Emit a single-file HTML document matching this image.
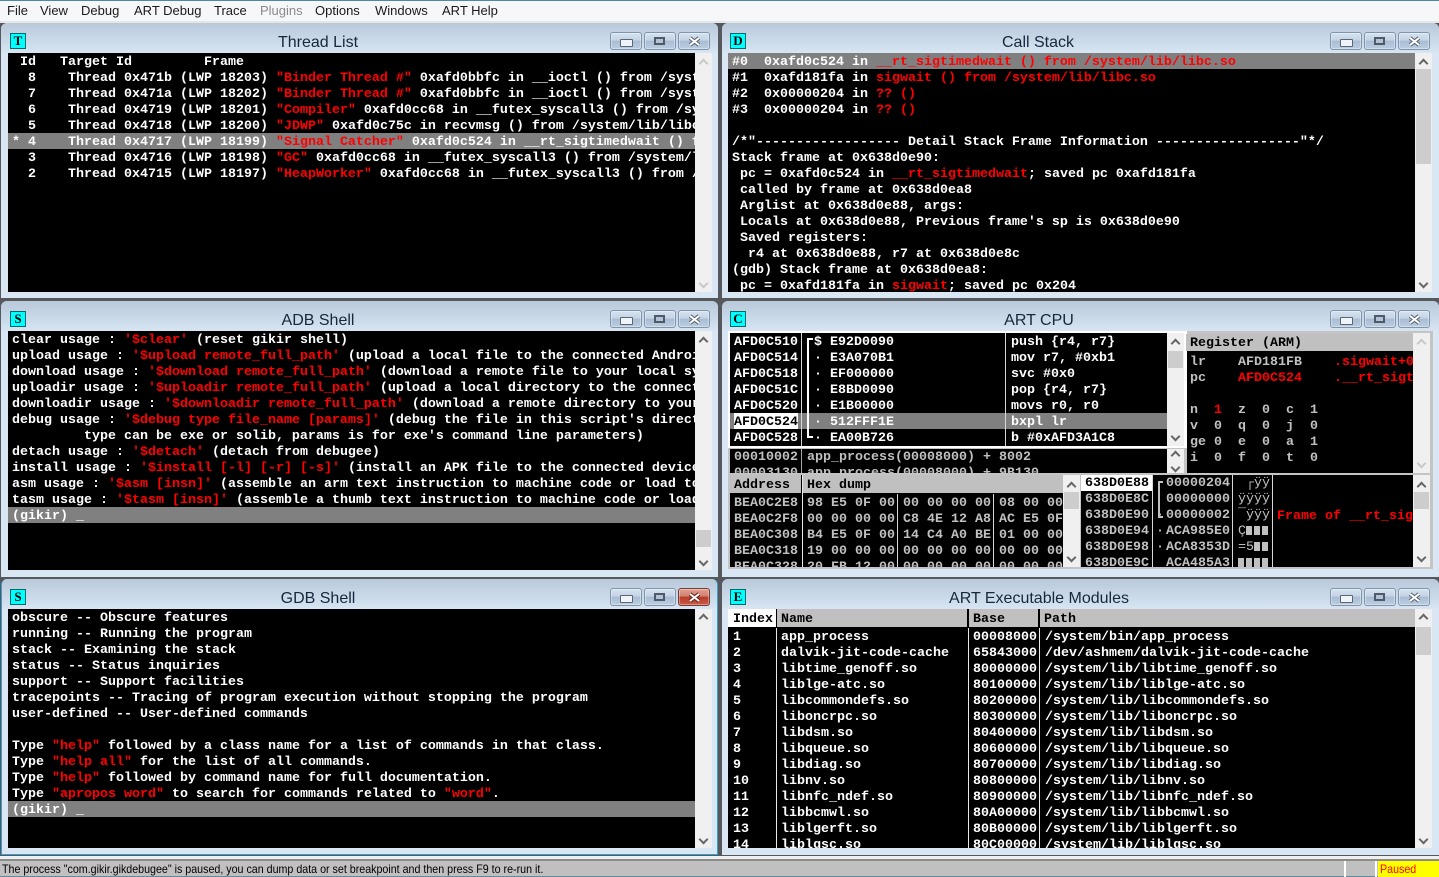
<!DOCTYPE html>
<html><head><meta charset="utf-8"><style>
html,body{margin:0;padding:0;width:1439px;height:877px;overflow:hidden;background:#55585c}
*{box-sizing:border-box}
div,pre{position:absolute;margin:0}
pre{font:bold 13.33px/16px "Liberation Mono","DejaVu Sans Mono",monospace;color:#fff;overflow:hidden;white-space:pre;padding-top:2px}
i{font-style:normal;color:#f00}
.g{color:#c0c0c0}
.k{background:#000}
.panel{background:#d9e6f4;border-radius:6px 6px 0 0}
.tbar{left:0;top:0;right:0;height:30px;background:linear-gradient(#b8c9da,#d7e5f3);border-radius:6px 6px 0 0}
.title{top:10px;font:16px/20px "Liberation Sans",sans-serif;color:#16283c;text-align:center;white-space:nowrap}
.ic{width:16px;height:16px;background:#00ffff;border:1px solid #0a6a6a;font:bold 13px/14px "Liberation Serif",serif;color:#000;text-align:center}
.bn{top:9px;width:32px;height:18px;border:1px solid #8094ae;border-radius:3px;background:linear-gradient(#d6e2ef 0,#c4d3e4 45%,#a8bdd4 50%,#bccde0 100%);box-shadow:inset 0 0 0 1px rgba(255,255,255,.35)}
.bn.m:after{content:"";position:absolute;left:9px;top:6px;width:11px;height:6px;background:#f0f4f8;border:1px solid #5a6675;border-radius:1px}
.bn.red{background:linear-gradient(#e0a090 0,#d08070 45%,#b83a28 50%,#c85a48 100%);border-color:#7a3a34}
.bn svg{position:absolute;left:9px;top:3px}
.bn svg.rs{top:4px}
.sb{background:#f0f0f0;width:17px}
.th{left:1px;width:15px;background:#cdcdcd}
.ch{width:7px;height:7px;left:5px;border-left:2px solid #666;border-top:2px solid #666;transform:rotate(45deg)}
.ch.d{transform:rotate(225deg)}
.ch.f{border-color:#c8c8c8}
.hl{background:#808080;height:16px}
.vs{width:1px;background:#d8d8d8}
.hd{background:#c0c0c0;color:#000}
.bk{width:6px;height:9px;background:#c0c0c0}
.menu{left:0;top:0;width:1439px;height:21px;background:#f6f7f8;border-top:1px solid #4a8aa8}
.menu span{position:absolute;top:1px;font:13px/18px "Liberation Sans",sans-serif;color:#1a1a1a;white-space:nowrap}
.nr{display:inline-block;white-space:nowrap;transform:scaleX(.89);transform-origin:0 0}
</style></head><body>
<div class="menu">
<span style="left:7px">File</span><span style="left:40px">View</span><span style="left:81px">Debug</span><span style="left:134px">ART Debug</span><span style="left:214px">Trace</span><span style="left:260px;color:#8a8a8a">Plugins</span><span style="left:315px">Options</span><span style="left:375px">Windows</span><span style="left:442px">ART Help</span>
</div>
<div style="left:0;top:21px;width:1439px;height:2px;background:#e6e6e6"></div>

<!-- Thread List -->
<div class="panel" style="left:1px;top:23px;width:717px;height:275px">
<div class="tbar"></div><div class="ic" style="left:9px;top:10px">T</div>
<div class="title" style="left:0;width:634px">Thread List</div>
<div class="bn m" style="left:609px"></div>
<div class="bn" style="left:643px"><svg class="rs" width="11" height="8"><rect x="1" y="1" width="9" height="6" fill="#b4c4d6" stroke="#4e5a6a" stroke-width="2"/></svg></div>
<div class="bn" style="left:677px"><svg width="13" height="11"><path d="M2 2 L11 9 M11 2 L2 9" stroke="#5a6675" stroke-width="4"/><path d="M2 2 L11 9 M11 2 L2 9" stroke="#fff" stroke-width="2"/></svg></div>
</div>
<div class="k" style="left:8px;top:53px;width:687px;height:239px"></div>
<div class="hl" style="left:8px;top:133px;width:687px"></div>
<pre style="left:12px;top:53px;width:683px;height:239px"> Id   Target Id         Frame
  8    Thread 0x471b (LWP 18203) <i>"Binder Thread #"</i> 0xafd0bbfc in __ioctl () from /system/lib/libc.so
  7    Thread 0x471a (LWP 18202) <i>"Binder Thread #"</i> 0xafd0bbfc in __ioctl () from /system/lib/libc.so
  6    Thread 0x4719 (LWP 18201) <i>"Compiler"</i> 0xafd0cc68 in __futex_syscall3 () from /system/lib/libc.so
  5    Thread 0x4718 (LWP 18200) <i>"JDWP"</i> 0xafd0c75c in recvmsg () from /system/lib/libc.so
* 4    Thread 0x4717 (LWP 18199) <i>"Signal Catcher"</i> 0xafd0c524 in __rt_sigtimedwait () from /system/lib/libc.so
  3    Thread 0x4716 (LWP 18198) <i>"GC"</i> 0xafd0cc68 in __futex_syscall3 () from /system/lib/libc.so
  2    Thread 0x4715 (LWP 18197) <i>"HeapWorker"</i> 0xafd0cc68 in __futex_syscall3 () from /system/lib/libc.so</pre>
<div class="sb" style="left:695px;top:53px;height:239px"><div class="ch f" style="top:7px"></div><div class="ch d f" style="top:227px"></div></div>

<!-- Call Stack -->
<div class="panel" style="left:722px;top:23px;width:717px;height:275px">
<div class="tbar"></div><div class="ic" style="left:8px;top:10px">D</div>
<div class="title" style="left:0;width:632px">Call Stack</div>
<div class="bn m" style="left:608px"></div>
<div class="bn" style="left:642px"><svg class="rs" width="11" height="8"><rect x="1" y="1" width="9" height="6" fill="#b4c4d6" stroke="#4e5a6a" stroke-width="2"/></svg></div>
<div class="bn" style="left:676px"><svg width="13" height="11"><path d="M2 2 L11 9 M11 2 L2 9" stroke="#5a6675" stroke-width="4"/><path d="M2 2 L11 9 M11 2 L2 9" stroke="#fff" stroke-width="2"/></svg></div>
</div>
<div class="k" style="left:728px;top:53px;width:687px;height:239px"></div>
<div class="hl" style="left:728px;top:53px;width:687px"></div>
<pre style="left:732px;top:53px;width:683px;height:239px">#0  0xafd0c524 in <i>__rt_sigtimedwait () from /system/lib/libc.so</i>
#1  0xafd181fa in <i>sigwait () from /system/lib/libc.so</i>
#2  0x00000204 in <i>?? ()</i>
#3  0x00000204 in <i>?? ()</i>

/*"------------------ Detail Stack Frame Information ------------------"*/
Stack frame at 0x638d0e90:
 pc = 0xafd0c524 in <i>__rt_sigtimedwait</i>; saved pc 0xafd181fa
 called by frame at 0x638d0ea8
 Arglist at 0x638d0e88, args:
 Locals at 0x638d0e88, Previous frame's sp is 0x638d0e90
 Saved registers:
  r4 at 0x638d0e88, r7 at 0x638d0e8c
(gdb) Stack frame at 0x638d0ea8:
 pc = 0xafd181fa in <i>sigwait</i>; saved pc 0x204</pre>
<div class="sb" style="left:1415px;top:53px;height:239px"><div class="ch" style="top:7px"></div><div class="th" style="top:16px;height:95px"></div><div class="ch d" style="top:227px"></div></div>

<!-- ADB Shell -->
<div class="panel" style="left:1px;top:301px;width:717px;height:276px">
<div class="tbar"></div><div class="ic" style="left:9px;top:10px">S</div>
<div class="title" style="left:0;width:634px">ADB Shell</div>
<div class="bn m" style="left:609px"></div>
<div class="bn" style="left:643px"><svg class="rs" width="11" height="8"><rect x="1" y="1" width="9" height="6" fill="#b4c4d6" stroke="#4e5a6a" stroke-width="2"/></svg></div>
<div class="bn" style="left:677px"><svg width="13" height="11"><path d="M2 2 L11 9 M11 2 L2 9" stroke="#5a6675" stroke-width="4"/><path d="M2 2 L11 9 M11 2 L2 9" stroke="#fff" stroke-width="2"/></svg></div>
</div>
<div class="k" style="left:8px;top:331px;width:687px;height:239px"></div>
<div class="hl" style="left:8px;top:507px;width:687px"></div>
<pre style="left:12px;top:331px;width:683px;height:239px">clear usage : <i>'$clear'</i> (reset gikir shell)
upload usage : <i>'$upload remote_full_path'</i> (upload a local file to the connected Android device)
download usage : <i>'$download remote_full_path'</i> (download a remote file to your local system)
uploadir usage : <i>'$uploadir remote_full_path'</i> (upload a local directory to the connected device)
downloadir usage : <i>'$downloadir remote_full_path'</i> (download a remote directory to your local system)
debug usage : <i>'$debug type file_name [params]'</i> (debug the file in this script's directory)
         type can be exe or solib, params is for exe's command line parameters)
detach usage : <i>'$detach'</i> (detach from debugee)
install usage : <i>'$install [-l] [-r] [-s]'</i> (install an APK file to the connected device)
asm usage : <i>'$asm [insn]'</i> (assemble an arm text instruction to machine code or load to memory)
tasm usage : <i>'$tasm [insn]'</i> (assemble a thumb text instruction to machine code or load to memory)
(gikir) _</pre>
<div class="sb" style="left:695px;top:331px;height:239px"><div class="ch" style="top:7px"></div><div class="th" style="top:199px;height:17px"></div><div class="ch d" style="top:227px"></div></div>

<!-- ART CPU -->
<div class="panel" style="left:722px;top:301px;width:717px;height:276px">
<div class="tbar"></div><div class="ic" style="left:8px;top:10px">C</div>
<div class="title" style="left:0;width:634px">ART CPU</div>
<div class="bn m" style="left:608px"></div>
<div class="bn" style="left:642px"><svg class="rs" width="11" height="8"><rect x="1" y="1" width="9" height="6" fill="#b4c4d6" stroke="#4e5a6a" stroke-width="2"/></svg></div>
<div class="bn" style="left:676px"><svg width="13" height="11"><path d="M2 2 L11 9 M11 2 L2 9" stroke="#5a6675" stroke-width="4"/><path d="M2 2 L11 9 M11 2 L2 9" stroke="#fff" stroke-width="2"/></svg></div>
</div>
<div style="left:728px;top:331px;width:705px;height:238px;background:#c4c4c4"></div>
<div style="left:728px;top:331px;width:459px;height:117px;background:#fff"></div>
<div class="k" style="left:730px;top:333px;width:437px;height:113px"></div>
<div class="hl" style="left:730px;top:413px;width:437px"></div>
<div style="left:734px;top:413px;width:64px;height:16px;background:#fff"></div>
<div class="vs" style="left:801px;top:333px;height:113px"></div>
<div class="vs" style="left:1005px;top:333px;height:113px"></div>
<pre style="left:734px;top:333px;width:66px;height:113px">AFD0C510
AFD0C514
AFD0C518
AFD0C51C
AFD0C520
<span style="color:#000">AFD0C524</span>
AFD0C528</pre>
<div style="left:807px;top:338px;width:6px;height:100px;border-left:2px solid #fff;border-top:2px solid #fff;border-bottom:2px solid #fff"></div>
<pre style="left:814px;top:333px;width:190px;height:113px">$ E92D0090
· E3A070B1
· EF000000
· E8BD0090
· E1B00000
· 512FFF1E
· EA00B726</pre>
<pre style="left:1011px;top:333px;width:156px;height:113px">push {r4, r7}
mov r7, #0xb1
svc #0x0
pop {r4, r7}
movs r0, r0
bxpl lr
b #0xAFD3A1C8</pre>
<div class="sb" style="left:1167px;top:333px;height:113px"><div class="ch" style="top:7px"></div><div class="th" style="top:18px;height:17px"></div><div class="ch d" style="top:100px"></div></div>
<div class="k" style="left:730px;top:449px;width:437px;height:24px"></div>
<div class="vs" style="left:801px;top:449px;height:24px;background:#a8a8a8"></div>
<pre class="g" style="left:734px;top:449px;width:66px;height:24px;padding-top:1px">00010002
00003130</pre>
<pre class="g" style="left:807px;top:449px;width:358px;height:24px;padding-top:1px">app_process(00008000) + 8002
app_process(00008000) + 9B130</pre>
<div class="sb" style="left:1167px;top:449px;height:24px"><div class="ch" style="top:3px"></div><div class="ch d" style="top:15px"></div></div>

<div class="k" style="left:1187px;top:334px;width:226px;height:139px"></div>
<pre class="hd" style="left:1186px;top:334px;width:227px;height:17px;padding-left:4px">Register (ARM)</pre>
<pre class="g" style="left:1190px;top:353px;width:223px;height:120px">lr    AFD181FB    <i>.sigwait+0x2</i>
pc    <i>AFD0C524</i>    <i>.__rt_sigtimedwait</i>

n  <i>1</i>  z  0  c  1
v  0  q  0  j  0
ge 0  e  0  a  1
i  0  f  0  t  0</pre>
<div class="sb" style="left:1413px;top:333px;height:140px"><div class="ch f" style="top:7px"></div><div class="ch d f" style="top:127px"></div></div>

<div class="k" style="left:730px;top:475px;width:333px;height:92px"></div>
<pre class="hd" style="left:730px;top:475px;width:71px;height:18px;padding:3px 0 0 4px">Address</pre>
<pre class="hd" style="left:803px;top:475px;width:260px;height:18px;padding:3px 0 0 4px">Hex dump</pre>
<div class="vs" style="left:802px;top:475px;height:92px;width:1px;background:#e8e8e8"></div>
<div class="vs" style="left:897px;top:494px;height:73px"></div>
<div class="vs" style="left:993px;top:494px;height:73px"></div>
<pre class="g" style="left:734px;top:494px;width:66px;height:73px">BEA0C2E8
BEA0C2F8
BEA0C308
BEA0C318
BEA0C328</pre>
<pre class="g" style="left:807px;top:494px;width:90px;height:73px">98 E5 0F 00
00 00 00 00
B4 E5 0F 00
19 00 00 00
20 FB 12 00</pre>
<pre class="g" style="left:903px;top:494px;width:90px;height:73px">00 00 00 00
C8 4E 12 A8
14 C4 A0 BE
00 00 00 00
00 00 00 00</pre>
<pre class="g" style="left:999px;top:494px;width:64px;height:73px">08 00 00 00
AC E5 0F 00
01 00 00 00
00 00 00 00
00 00 00 00</pre>
<div class="sb" style="left:1063px;top:475px;height:92px;border-right:0"><div class="ch" style="top:8px"></div><div class="th" style="top:17px;height:17px"></div><div class="ch d" style="top:79px"></div></div>

<div class="k" style="left:1081px;top:475px;width:332px;height:92px"></div>
<div style="left:1081px;top:475px;width:71px;height:16px;background:#fff"></div>
<div class="vs" style="left:1152px;top:475px;height:92px"></div>
<div class="vs" style="left:1232px;top:475px;height:92px"></div>
<div class="vs" style="left:1272px;top:475px;height:92px"></div>
<pre class="g" style="left:1085px;top:475px;width:66px;height:92px;padding-top:1px"><span style="color:#000">638D0E88</span>
638D0E8C
638D0E90
638D0E94
638D0E98
638D0E9C</pre>
<div style="left:1158px;top:481px;width:5px;height:37px;border-left:2px solid #c0c0c0;border-top:2px solid #c0c0c0;border-bottom:2px solid #c0c0c0"></div>
<pre class="g" style="left:1166px;top:475px;width:66px;height:92px;padding-top:1px">00000204
00000000
00000002
ACA985E0
ACA8353D
ACA485A3</pre>
<pre class="g" style="left:1156px;top:475px;width:9px;height:92px;padding-top:1px">


·
·
·</pre>
<pre class="g" style="left:1238px;top:475px;width:34px;height:92px;padding-top:1px;font-weight:normal"> ┌ÿÿ
ÿÿÿÿ
¯ÿÿÿ
Ç
=5</pre>
<div class="bk" style="left:1246px;top:526px"></div><div class="bk" style="left:1254px;top:526px"></div><div class="bk" style="left:1262px;top:526px"></div>
<div class="bk" style="left:1254px;top:542px"></div><div class="bk" style="left:1262px;top:542px"></div>
<div class="bk" style="left:1238px;top:558px"></div><div class="bk" style="left:1246px;top:558px"></div><div class="bk" style="left:1254px;top:558px"></div><div class="bk" style="left:1262px;top:558px"></div>
<pre style="left:1277px;top:507px;width:136px;height:18px;color:#f00">Frame of __rt_sigtimedwait</pre>
<div class="sb" style="left:1413px;top:475px;height:92px"><div class="ch" style="top:8px"></div><div class="th" style="top:17px;height:17px"></div><div class="ch d" style="top:79px"></div></div>

<!-- GDB Shell -->
<div class="panel" style="left:1px;top:579px;width:717px;height:276px;border-right:1px solid #3aa0d0;border-left:1px solid #3aa0d0;border-bottom:1px solid #3aa0d0">
<div class="tbar"></div><div class="ic" style="left:8px;top:10px">S</div>
<div class="title" style="left:0;width:632px">GDB Shell</div>
<div class="bn m" style="left:608px"></div>
<div class="bn" style="left:642px"><svg class="rs" width="11" height="8"><rect x="1" y="1" width="9" height="6" fill="#b4c4d6" stroke="#4e5a6a" stroke-width="2"/></svg></div>
<div class="bn red" style="left:676px"><svg width="13" height="11"><path d="M2 2 L11 9 M11 2 L2 9" stroke="#6a2018" stroke-width="4"/><path d="M2 2 L11 9 M11 2 L2 9" stroke="#fff" stroke-width="2"/></svg></div>
</div>
<div class="k" style="left:8px;top:609px;width:687px;height:239px"></div>
<div class="hl" style="left:8px;top:801px;width:687px"></div>
<pre style="left:12px;top:609px;width:683px;height:239px">obscure -- Obscure features
running -- Running the program
stack -- Examining the stack
status -- Status inquiries
support -- Support facilities
tracepoints -- Tracing of program execution without stopping the program
user-defined -- User-defined commands

Type <i>"help"</i> followed by a class name for a list of commands in that class.
Type <i>"help all"</i> for the list of all commands.
Type <i>"help"</i> followed by command name for full documentation.
Type <i>"apropos word"</i> to search for commands related to <i>"word"</i>.
(gikir) _</pre>
<div class="sb" style="left:695px;top:609px;height:239px"><div class="ch" style="top:6px"></div><div class="ch d" style="top:227px"></div></div>

<!-- Modules -->
<div class="panel" style="left:722px;top:579px;width:717px;height:276px">
<div class="tbar"></div><div class="ic" style="left:8px;top:10px">E</div>
<div class="title" style="left:0;width:634px">ART Executable Modules</div>
<div class="bn m" style="left:608px"></div>
<div class="bn" style="left:642px"><svg class="rs" width="11" height="8"><rect x="1" y="1" width="9" height="6" fill="#b4c4d6" stroke="#4e5a6a" stroke-width="2"/></svg></div>
<div class="bn" style="left:676px"><svg width="13" height="11"><path d="M2 2 L11 9 M11 2 L2 9" stroke="#5a6675" stroke-width="4"/><path d="M2 2 L11 9 M11 2 L2 9" stroke="#fff" stroke-width="2"/></svg></div>
</div>
<div class="k" style="left:728px;top:609px;width:687px;height:239px"></div>
<pre style="left:728px;top:609px;width:48px;height:18px;background:#fff;color:#000;padding:3px 0 0 5px">Index</pre>
<pre class="hd" style="left:777px;top:609px;width:190px;height:18px;padding:3px 0 0 4px">Name</pre>
<pre class="hd" style="left:969px;top:609px;width:69px;height:18px;padding:3px 0 0 4px">Base</pre>
<pre class="hd" style="left:1040px;top:609px;width:375px;height:18px;padding:3px 0 0 4px">Path</pre>
<div class="vs" style="left:776px;top:628px;height:220px;background:#e8e8e8"></div>
<div class="vs" style="left:968px;top:628px;height:220px;background:#e8e8e8"></div>
<div class="vs" style="left:1039px;top:628px;height:220px;background:#e8e8e8"></div>
<pre style="left:733px;top:628px;width:42px;height:220px">1
2
3
4
5
6
7
8
9
10
11
12
13
14</pre>
<pre style="left:781px;top:628px;width:186px;height:220px">app_process
dalvik-jit-code-cache
libtime_genoff.so
liblge-atc.so
libcommondefs.so
liboncrpc.so
libdsm.so
libqueue.so
libdiag.so
libnv.so
libnfc_ndef.so
libbcmwl.so
liblgerft.so
liblgsc.so</pre>
<pre style="left:973px;top:628px;width:66px;height:220px">00008000
65843000
80000000
80100000
80200000
80300000
80400000
80600000
80700000
80800000
80900000
80A00000
80B00000
80C00000</pre>
<pre style="left:1045px;top:628px;width:370px;height:220px">/system/bin/app_process
/dev/ashmem/dalvik-jit-code-cache
/system/lib/libtime_genoff.so
/system/lib/liblge-atc.so
/system/lib/libcommondefs.so
/system/lib/liboncrpc.so
/system/lib/libdsm.so
/system/lib/libqueue.so
/system/lib/libdiag.so
/system/lib/libnv.so
/system/lib/libnfc_ndef.so
/system/lib/libbcmwl.so
/system/lib/liblgerft.so
/system/lib/liblgsc.so</pre>
<div class="sb" style="left:1415px;top:609px;height:239px"><div class="ch" style="top:6px"></div><div class="th" style="top:18px;height:28px"></div><div class="ch d" style="top:227px"></div></div>

<!-- Status bar -->
<div style="left:0;top:856px;width:1439px;height:21px;background:#f0f0f0"></div>
<div style="left:0;top:859px;width:1439px;height:2px;background:#8a8a8a"></div>
<div style="left:0;top:861px;width:1439px;height:15px;background:#c0c0c0"></div>
<div style="left:0;top:876px;width:1439px;height:1px;background:#5f8aa0"></div>
<div style="left:2px;top:861px;width:1300px;font:12px/16px 'Liberation Sans',sans-serif;color:#000"><span class="nr">The process "com.gikir.gikdebugee" is paused, you can dump data or set breakpoint and then press F9 to re-run it.</span></div>
<div style="left:1344px;top:861px;width:2px;height:16px;background:#fff"></div>
<div style="left:1375px;top:861px;width:2px;height:16px;background:#fff"></div>
<div style="left:1378px;top:861px;width:61px;height:16px;background:#ffff00;font:12px/16px 'Liberation Sans',sans-serif;color:#f00;padding-left:2px"><span class="nr">Paused</span></div>
</body></html>
